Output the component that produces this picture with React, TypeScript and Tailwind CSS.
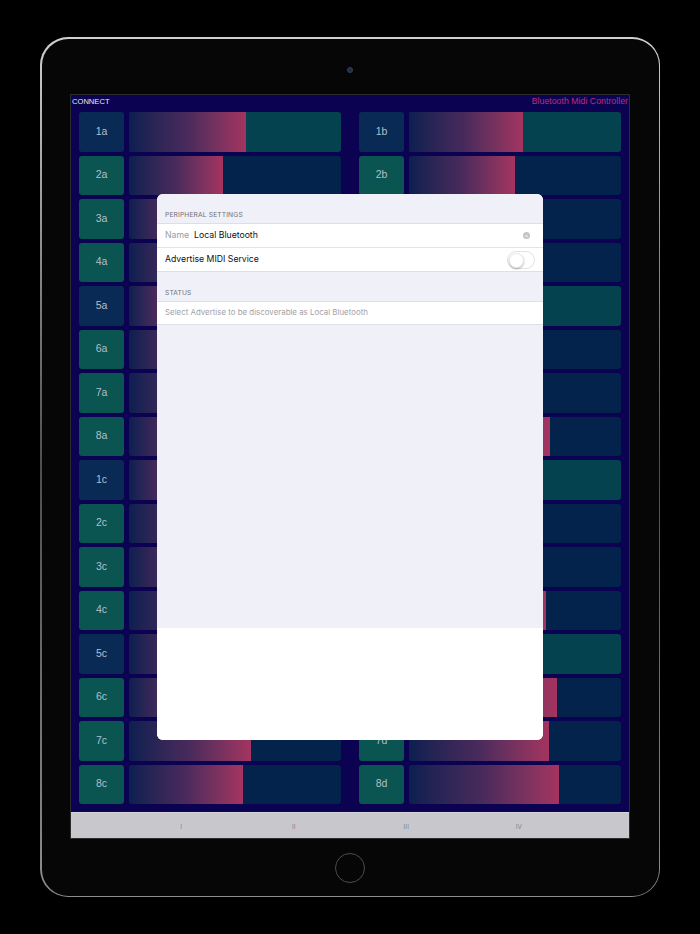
import React from "react";

type Cell = { label: string; value: number; accent: boolean };

// accent rows (1 and 5 of every bank) have a navy key and a teal track
const bank = (suffix: string, values: number[]): Cell[] =>
  values.map((value, i) => ({ label: `${i + 1}${suffix}`, value, accent: i === 0 || i === 4 }));

const leftColumn = [
  ...bank("a", [0.552, 0.443, 0.31, 0.42, 0.26, 0.38, 0.47, 0.34]),
  ...bank("c", [0.29, 0.44, 0.36, 0.52, 0.4, 0.33, 0.575, 0.538]),
];

const rightColumn = [
  ...bank("b", [0.538, 0.5, 0.3, 0.41, 0.22, 0.36, 0.45, 0.665]),
  ...bank("d", [0.28, 0.4, 0.33, 0.645, 0.25, 0.7, 0.66, 0.708]),
];

function Row({ cell }: { cell: Cell }) {
  return (
    <div className="flex gap-[5px] h-[39.5px]">
      <div
        className={`w-[45px] shrink-0 rounded-[3px] flex items-center justify-center text-[10.5px] text-[#b5bfc8] ${
          cell.accent ? "bg-[#0a2a56]" : "bg-[#0a5451]"
        }`}
      >
        {cell.label}
      </div>
      <div
        className={`flex-1 rounded-[3px] overflow-hidden flex ${cell.accent ? "bg-[#04424f]" : "bg-[#03224c]"}`}
      >
        <div
          className="h-full bg-linear-to-r from-[#0b1f50] via-[#4a2a5c] to-[#a5335f]"
          style={{ width: `${cell.value * 100}%` }}
        />
      </div>
    </div>
  );
}

function Toggle() {
  return (
    <div className="w-[28px] h-[18px] rounded-full bg-white border border-[#e2e2e6] p-[1px] flex">
      <div className="w-[15px] h-[15px] rounded-full bg-white shadow-[0_1px_2px_rgba(0,0,0,0.3)] border border-[#ececef]" />
    </div>
  );
}

function SettingsSheet() {
  return (
    <div
      className="absolute left-[86px] top-[99px] w-[386px] h-[546px] rounded-[6px] overflow-hidden flex flex-col bg-white"
      style={{ fontFamily: "Inter, 'Noto Sans', sans-serif" }}
    >
      <div className="h-[434px] bg-[#f0f1f8] flex flex-col">
        <div className="h-[29px] flex items-end px-[8px] pb-[3px] text-[6.7px] tracking-[0.02em] text-[#707075]">
          PERIPHERAL SETTINGS
        </div>
        <div className="bg-white border-y border-[#dedee3]">
          <div className="h-[24px] flex items-center px-[8px] border-b border-[#e4e4e8]">
            <span className="text-[8.7px] text-[#9a9aa0] mr-[5px]">Name</span>
            <span className="text-[8.7px] text-[#111]">Local Bluetooth</span>
            <span className="ml-auto mr-[5px] w-[7px] h-[7px] rounded-full bg-[#c4c4c9] flex items-center justify-center text-white text-[5px] leading-none">
              ×
            </span>
          </div>
          <div className="h-[23px] flex items-center px-[8px]">
            <span className="text-[8.7px] text-[#111]">Advertise MIDI Service</span>
            <div className="ml-auto">
              <Toggle />
            </div>
          </div>
        </div>
        <div className="h-[29px] flex items-end px-[8px] pb-[3px] text-[6.7px] tracking-[0.02em] text-[#707075]">
          STATUS
        </div>
        <div className="h-[24px] bg-white border-y border-[#dedee3] flex items-center px-[8px] text-[7.9px] text-[#a2a2a7]">
          Select Advertise to be discoverable as Local Bluetooth
        </div>
      </div>
      <div className="flex-1 bg-white" />
    </div>
  );
}

export default function App() {
  return (
    <div className="w-full h-[934px] bg-black pt-[37px]">
      <div className="mx-auto w-[620px] h-[860px] rounded-[28px] p-[1.5px] bg-linear-to-b from-[#d0d0d0] via-[#4e4e4e] to-[#8e8e8e]">
        <div className="h-full rounded-[26.5px] bg-[#060606] flex flex-col items-center">
          <div className="h-[55.5px] pt-[28.5px]">
            <div className="w-[6px] h-[6px] rounded-full bg-[#1c2b55] border border-[#3a4150]" />
          </div>

          <div
            className="relative w-[560px] h-[745px] border border-[#2c2c2c] bg-[#0b0351] flex flex-col"
            style={{ fontFamily: "'Liberation Sans', Arial, sans-serif" }}
          >
            <div className="h-[17px] flex items-start justify-between px-[1px] pt-[1px] leading-[11px]">
              <span className="text-[7.6px] text-[#e8e8f0]">CONNECT</span>
              <span className="text-[8.8px] text-[#c02a7c]">Bluetooth Midi Controller</span>
            </div>

            <div className="h-[692px] px-[8px] flex gap-[18px]">
              <div className="flex-1 flex flex-col gap-[4px]">
                {leftColumn.map((c) => (
                  <Row key={c.label} cell={c} />
                ))}
              </div>
              <div className="flex-1 flex flex-col gap-[4px]">
                {rightColumn.map((c) => (
                  <Row key={c.label} cell={c} />
                ))}
              </div>
            </div>

            <div className="h-[8px]" />

            <div className="h-[26px] bg-[#c8c8cc] border-t border-[#d6d6da] flex justify-center pt-[2px]">
              {["I", "II", "III", "IV"].map((t) => (
                <div key={t} className="w-[112.5px] flex items-center justify-center text-[6.5px] text-[#85858a]">
                  {t}
                </div>
              ))}
            </div>

            <SettingsSheet />
          </div>

          <div className="flex-1 pt-[14px]">
            <div className="w-[30px] h-[30px] rounded-full border-[1.5px] border-[#4c4c4c]" />
          </div>
        </div>
      </div>
    </div>
  );
}
